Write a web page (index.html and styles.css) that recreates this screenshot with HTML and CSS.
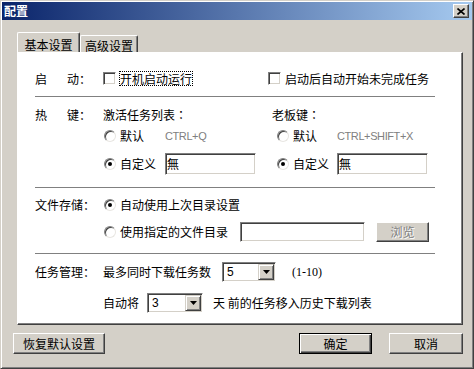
FILE: index.html
```html
<!DOCTYPE html>
<html lang="zh-CN">
<head>
    <meta charset="UTF-8">
    <title>配置</title>
    <link rel="stylesheet" href="styles.css">
</head>
<body>
    <div class="window">
        <div class="titlebar">
            <span class="title">配置</span>
            <span class="close">
                <svg width="8" height="7" viewBox="0 0 8 7"><path d="M0.5 0.5L7.5 6.5M7.5 0.5L0.5 6.5" stroke="#000" stroke-width="1.6" fill="none"/></svg>
            </span>
        </div>

        <div class="tabs">
            <div class="tab active">基本设置</div>
            <div class="tab">高级设置</div>
        </div>

        <div class="panel">
            <!-- 启动 -->
            <div class="row row-start">
                <div class="label"><span class="first">启</span>动<span class="colon">：</span></div>
                <div class="start-a"><span class="check"></span><span class="focus">开机启动运行</span></div>
                <div class="start-b"><span class="check"></span>启动后自动开始未完成任务</div>
            </div>
            <div class="sep"></div>

            <!-- 热键 -->
            <div class="row row-hk-head">
                <div class="label"><span class="first">热</span>键<span class="colon">：</span></div>
                <div class="col-a">激活任务列表<span class="colon">：</span></div>
                <div class="col-b">老板键<span class="colon">：</span></div>
            </div>
            <div class="row row-hk-def">
                <div class="label"></div>
                <div class="col-a">
                    <span class="pair pair-a"><span class="radio"></span>默认</span>
                    <span class="hint">CTRL+Q</span>
                </div>
                <div class="col-b sub">
                    <span class="pair pair-b"><span class="radio"></span>默认</span>
                    <span class="hint">CTRL+SHIFT+X</span>
                </div>
            </div>
            <div class="row row-hk-own">
                <div class="label"></div>
                <div class="col-a">
                    <span class="pair pair-a"><span class="radio on"></span>自定义</span>
                    <span class="field field-key">無</span>
                </div>
                <div class="col-b sub">
                    <span class="pair pair-b"><span class="radio on"></span>自定义</span>
                    <span class="field field-key">無</span>
                </div>
            </div>
            <div class="sep sep-hk"></div>

            <!-- 文件存储 -->
            <div class="row row-file1">
                <div class="label">文件存储<span class="colon">：</span></div>
                <span class="pair"><span class="radio on"></span>自动使用上次目录设置</span>
            </div>
            <div class="row row-file2">
                <div class="label"></div>
                <span class="pair pair-dir"><span class="radio"></span>使用指定的文件目录</span>
                <span class="field field-dir"></span>
                <span class="btn btn-browse">浏览</span>
            </div>
            <div class="sep sep-file"></div>

            <!-- 任务管理 -->
            <div class="row row-task1">
                <div class="label">任务管理<span class="colon">：</span></div>
                <span>最多同时下载任务数</span>
                <span class="select select-max"><span class="value">5</span><span class="drop"><svg width="7" height="4" viewBox="0 0 7 4"><path d="M0 0H7L3.5 4Z" fill="#000"/></svg></span></span>
                <span class="range">(1-10)</span>
            </div>
            <div class="row row-task2">
                <div class="label"></div>
                <span>自动将</span>
                <span class="select select-days"><span class="value">3</span><span class="drop"><svg width="7" height="4" viewBox="0 0 7 4"><path d="M0 0H7L3.5 4Z" fill="#000"/></svg></span></span>
                <span class="after">天 前的任务移入历史下载列表</span>
            </div>
        </div>

        <div class="footer">
            <span class="btn btn-reset">恢复默认设置</span>
            <span class="spacer"></span>
            <span class="btn btn-default">确定</span>
            <span class="btn btn-cancel">取消</span>
        </div>
    </div>
</body>
</html>
```

FILE: styles.css
```css
* {
    box-sizing: border-box;
}
body {
    margin: 0;
    font-family: "Noto Sans CJK SC", sans-serif;
    font-size: 12px;
    line-height: 14px;
    color: #000;
    background-color: #d4d0c8;
}
.window {
    width: 474px;
    height: 369px;
    display: flex;
    flex-direction: column;
    padding: 1px;
    border: 1px solid;
    border-color: #d4d0c8 #404040 #404040 #d4d0c8;
    box-shadow: inset 1px 1px #fff, inset -1px -1px #808080;
    background-color: #d4d0c8;
}
.titlebar {
    height: 18px;
    flex: none;
    display: flex;
    align-items: center;
    justify-content: space-between;
    padding: 0 3px 0 2px;
    background: linear-gradient(to right, #0a246a, #a6caf0);
}
.title {
    color: #fff;
    font-weight: bold;
}
.close {
    width: 16px;
    height: 14px;
    display: flex;
    align-items: center;
    justify-content: center;
    background-color: #d4d0c8;
    border: 1px solid;
    border-color: #fff #404040 #404040 #fff;
    box-shadow: inset -1px -1px #808080;
}
.tabs {
    display: flex;
    align-items: flex-end;
    height: 20px;
    flex: none;
    margin: 12px 0 0 15px;
}
.tab {
    width: 58px;
    height: 17px;
    padding-top: 3px;
    text-align: center;
    border: 1px solid;
    border-bottom: none;
    border-color: #fff #404040 transparent #fff;
    border-radius: 2px 2px 0 0;
    box-shadow: inset -1px 0 #808080;
}
.tab.active {
    width: 63px;
    height: 20px;
    padding-top: 5px;
}
.panel {
    width: 446px;
    height: 273px;
    flex: none;
    margin-left: 15px;
    padding-left: 17px;
    background-color: #fff;
    border: 1px solid;
    border-color: #fff #404040 #404040 #fff;
    box-shadow: inset -1px -1px #808080;
}
.row {
    display: flex;
    align-items: center;
    height: 20px;
}
.label {
    width: 68px;
    flex: none;
}
.label .first {
    display: inline-block;
    width: 32px;
}
/* centred full-width colon */
.colon {
    font-family: "Noto Sans CJK TC", "Noto Sans CJK SC", sans-serif;
}
.sep {
    width: 400px;
    height: 1px;
    background-color: #808080;
    margin-top: 5px;
}
.sep-hk {
    margin-top: 12px;
}
.sep-file {
    margin-top: 11px;
}

/* startup row */
.row-start {
    height: 25px;
    margin-top: 13px;
}
.start-a {
    width: 165px;
    display: flex;
    align-items: center;
}
.start-b {
    display: flex;
    align-items: center;
}
.start-b .check {
    margin-right: 4px;
}
.check {
    width: 13px;
    height: 13px;
    flex: none;
    margin-right: 3px;
    background-color: #fff;
    border: 1px solid;
    border-color: #808080 #fff #fff #808080;
    box-shadow: inset 1px 1px #404040, inset -1px -1px #d4d0c8;
}
.focus {
    border: 1px dotted #000;
    line-height: 13px;
}

/* hotkeys */
.row-hk-head {
    margin-top: 8px;
}
.row-hk-def {
    margin-top: 1px;
}
.row-hk-own {
    height: 22px;
    margin-top: 7px;
}
.col-a {
    width: 169px;
    flex: none;
    display: flex;
    align-items: center;
}
.col-b {
    display: flex;
    align-items: center;
}
.col-b.sub {
    padding-left: 5px;
}
.pair {
    display: flex;
    align-items: center;
}
.pair-a {
    width: 62px;
    padding-left: 1px;
}
.pair-b {
    width: 60px;
}
.pair-dir {
    width: 137px;
    padding-left: 1px;
}
.row-file1 .pair {
    padding-left: 1px;
}
.radio {
    width: 12px;
    height: 12px;
    flex: none;
    margin-right: 4px;
    display: flex;
    align-items: center;
    justify-content: center;
    border-radius: 50%;
    background-color: #fff;
    border: 1px solid;
    border-color: #808080 #e8e6e2 #e8e6e2 #808080;
    box-shadow: inset 1px 1px #404040;
}
.radio.on::after {
    content: "";
    width: 4px;
    height: 4px;
    border-radius: 50%;
    background-color: #000;
}
.hint {
    font-family: "Liberation Sans", sans-serif;
    font-size: 11px;
    letter-spacing: -0.4px;
    color: #808080;
}
.field {
    height: 21px;
    display: flex;
    align-items: center;
    background-color: #fff;
    border: 1px solid;
    border-color: #808080 #fff #fff #808080;
    box-shadow: inset 1px 1px #404040, inset -1px -1px #d4d0c8;
    padding-left: 1px;
}
.field-key {
    width: 91px;
    height: 22px;
}

/* file storage */
.row-file1 {
    margin-top: 7px;
}
.row-file2 {
    margin-top: 7px;
}
.field-dir {
    width: 125px;
    height: 20px;
}
.btn {
    display: flex;
    align-items: center;
    justify-content: center;
    background-color: #d4d0c8;
    border: 1px solid;
    border-color: #fff #404040 #404040 #fff;
    box-shadow: inset -1px -1px #808080;
}
.btn-browse {
    width: 53px;
    height: 20px;
    margin-left: 11px;
    color: #808080;
    text-shadow: 1px 1px #fff;
}

/* task management */
.row-task1 {
    margin-top: 8px;
}
.row-task2 {
    margin-top: 11px;
}
.select {
    height: 20px;
    display: flex;
    align-items: center;
    justify-content: space-between;
    padding: 1px;
    background-color: #fff;
    border: 1px solid;
    border-color: #808080 #fff #fff #808080;
    box-shadow: inset 1px 1px #404040, inset -1px -1px #d4d0c8;
    font-family: "Liberation Sans", sans-serif;
    font-size: 12px;
}
.select .value {
    padding-left: 3px;
}
.select-max {
    width: 54px;
    margin-left: 11px;
}
.select-days {
    width: 56px;
    margin-left: 8px;
}
.drop {
    width: 16px;
    height: 16px;
    display: flex;
    align-items: center;
    justify-content: center;
    background-color: #d4d0c8;
    border: 1px solid;
    border-color: #d4d0c8 #404040 #404040 #d4d0c8;
    box-shadow: inset 1px 1px #fff, inset -1px -1px #808080;
}
.range {
    margin-left: 16px;
    font-family: "Liberation Serif", serif;
    font-size: 12px;
}
.after {
    margin-left: 10px;
}

/* footer buttons */
.footer {
    display: flex;
    height: 21px;
    margin: 8px 9px 0 11px;
}
.footer .btn {
    height: 21px;
}
.btn-reset {
    width: 92px;
}
.spacer {
    flex: 1;
}
.btn-default {
    width: 73px;
    border: 1px solid #000;
    box-shadow: inset 1px 1px #fff, inset -1px -1px #404040, inset -2px -2px #808080;
}
.btn-cancel {
    width: 74px;
    margin-left: 17px;
}
```
